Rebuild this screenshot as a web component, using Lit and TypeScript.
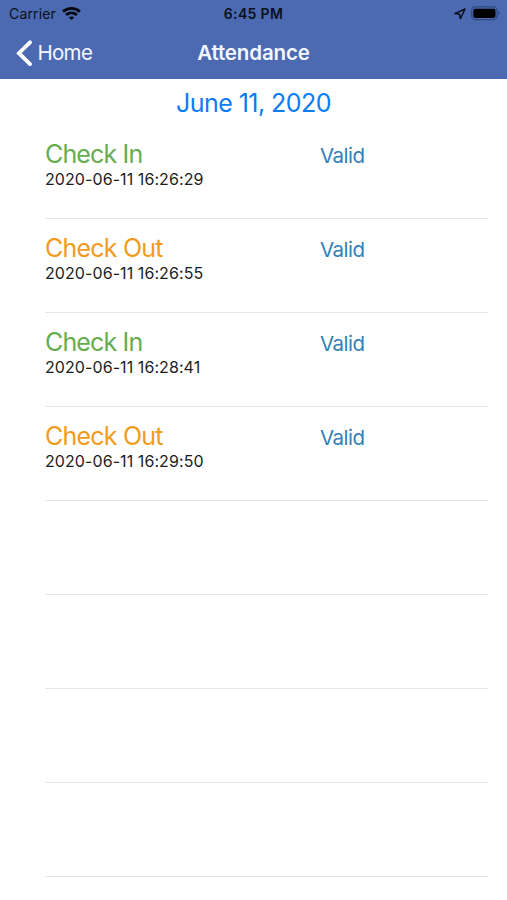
import { LitElement, html, css } from "lit";
import { customElement, property } from "lit/decorators.js";
import { classMap } from "lit/directives/class-map.js";

interface Entry {
  kind: "in" | "out";
  time: string;
  status: string;
}

const ENTRIES: Entry[] = [
  { kind: "in", time: "2020-06-11 16:26:29", status: "Valid" },
  { kind: "out", time: "2020-06-11 16:26:55", status: "Valid" },
  { kind: "in", time: "2020-06-11 16:28:41", status: "Valid" },
  { kind: "out", time: "2020-06-11 16:29:50", status: "Valid" },
];

const EMPTY_ROWS = 5;

@customElement("status-bar")
class StatusBar extends LitElement {
  static styles = css`
    :host {
      display: grid;
      grid-template-columns: 1fr auto 1fr;
      align-items: center;
      height: 27px;
      padding: 0 7px;
      color: #0b1020;
      font-size: 14px;
      line-height: 27px;
    }
    .left, .right { display: flex; align-items: center; }
    .left { gap: 6px; padding-left: 2px; letter-spacing: 0.15px; }
    .right { justify-content: flex-end; gap: 5px; }
    .time { font-weight: 600; letter-spacing: 0.35px; }
    svg { display: block; }
  `;
  render() {
    return html`
      <div class="left">
        <span>Carrier</span>
        <svg width="19" height="14" viewBox="0 0 19 14" fill="none" stroke="#05070d" stroke-width="2.8">
          <path d="M1.1 4.6C5.8 .4 13.2 .4 17.9 4.6" />
          <path d="M4.1 8C7.2 5.2 11.8 5.2 14.9 8" />
          <path d="M9.5 13.1L6.8 10.5C8.3 9.2 10.7 9.2 12.2 10.5Z" fill="#05070d" stroke="none" />
        </svg>
      </div>
      <span class="time">6:45 PM</span>
      <div class="right">
        <svg width="12" height="12" viewBox="0 0 12 12" fill="none" stroke="#0b1020" stroke-width="1.5" stroke-linejoin="round">
          <path d="M11 1L.9 5.6L5.5 6.3L6.4 10.6Z" />
        </svg>
        <svg width="29" height="15" viewBox="0 0 29 15">
          <rect x=".7" y=".9" width="25.4" height="12.8" rx="3.8" fill="none" stroke="#2f4b80" stroke-width="1.3" />
          <rect x="2.3" y="2.7" width="22.2" height="9.2" rx="2" fill="#000" />
          <path d="M27.3 5.1C29.1 5.9 29.1 8.7 27.3 9.5Z" fill="#2f4b80" />
        </svg>
      </div>
    `;
  }
}

@customElement("nav-bar")
class NavBar extends LitElement {
  static styles = css`
    :host {
      display: grid;
      grid-template-columns: 1fr auto 1fr;
      align-items: center;
      height: 52px;
      padding: 0 16px;
      color: #f4f7ff;
      font-size: 20.5px;
      line-height: 52px;
    }
    .back { display: flex; align-items: center; gap: 4.4px; letter-spacing: -0.65px; }
    .title { font-weight: 600; letter-spacing: -0.12px; }
    svg { display: block; }
  `;
  render() {
    return html`
      <div class="back">
        <svg width="17" height="27" viewBox="0 0 17 27" fill="none" stroke="#fff" stroke-width="3.8" stroke-linecap="round">
          <path d="M14 2.3L2.9 13.2L14 24.1" />
        </svg>
        <span>Home</span>
      </div>
      <span class="title">Attendance</span>
    `;
  }
}

@customElement("attendance-row")
class AttendanceRow extends LitElement {
  @property({ attribute: false }) entry?: Entry;

  static styles = css`
    :host {
      display: grid;
      grid-template-columns: 275px 1fr;
      box-sizing: border-box;
      height: 94.05px;
      margin: 0 19px 0 45px;
      padding-top: 14px;
      border-bottom: 1px solid #e6e6e8;
    }
    .kind { font-size: 25px; line-height: 30px; letter-spacing: -0.85px; }
    .out { letter-spacing: -0.78px; }
    .in { color: #67ad4e; }
    .out { color: #f19b1c; }
    .stamp { color: #1c1c1e; font-size: 16px; line-height: 20px; letter-spacing: 0.08px; }
    .status { color: #3180b8; font-size: 20.5px; line-height: 34px; letter-spacing: -0.5px; }
  `;
  render() {
    const e = this.entry;
    if (!e) return null;
    return html`
      <div>
        <div class=${classMap({ kind: true, in: e.kind === "in", out: e.kind === "out" })}>
          ${e.kind === "in" ? "Check In" : "Check Out"}
        </div>
        <div class="stamp">${e.time}</div>
      </div>
      <div class="status">${e.status}</div>
    `;
  }
}

@customElement("app-root")
class AppRoot extends LitElement {
  static styles = css`
    :host {
      display: block;
      height: 900px;
      overflow: hidden;
      background: #fff;
      font-family: Inter, "Liberation Sans", sans-serif;
    }
    .header { background: #4c6ab1; height: 79px; }
    .date {
      height: 46px;
      color: #0a7cf5;
      font-size: 25px;
      line-height: 48px;
      letter-spacing: -0.55px;
      text-align: center;
    }
  `;
  render() {
    return html`
      <div class="header">
        <status-bar></status-bar>
        <nav-bar></nav-bar>
      </div>
      <div class="date">June 11, 2020</div>
      ${ENTRIES.map((e) => html`<attendance-row .entry=${e}></attendance-row>`)}
      ${Array.from({ length: EMPTY_ROWS }, () => html`<attendance-row></attendance-row>`)}
    `;
  }
}
